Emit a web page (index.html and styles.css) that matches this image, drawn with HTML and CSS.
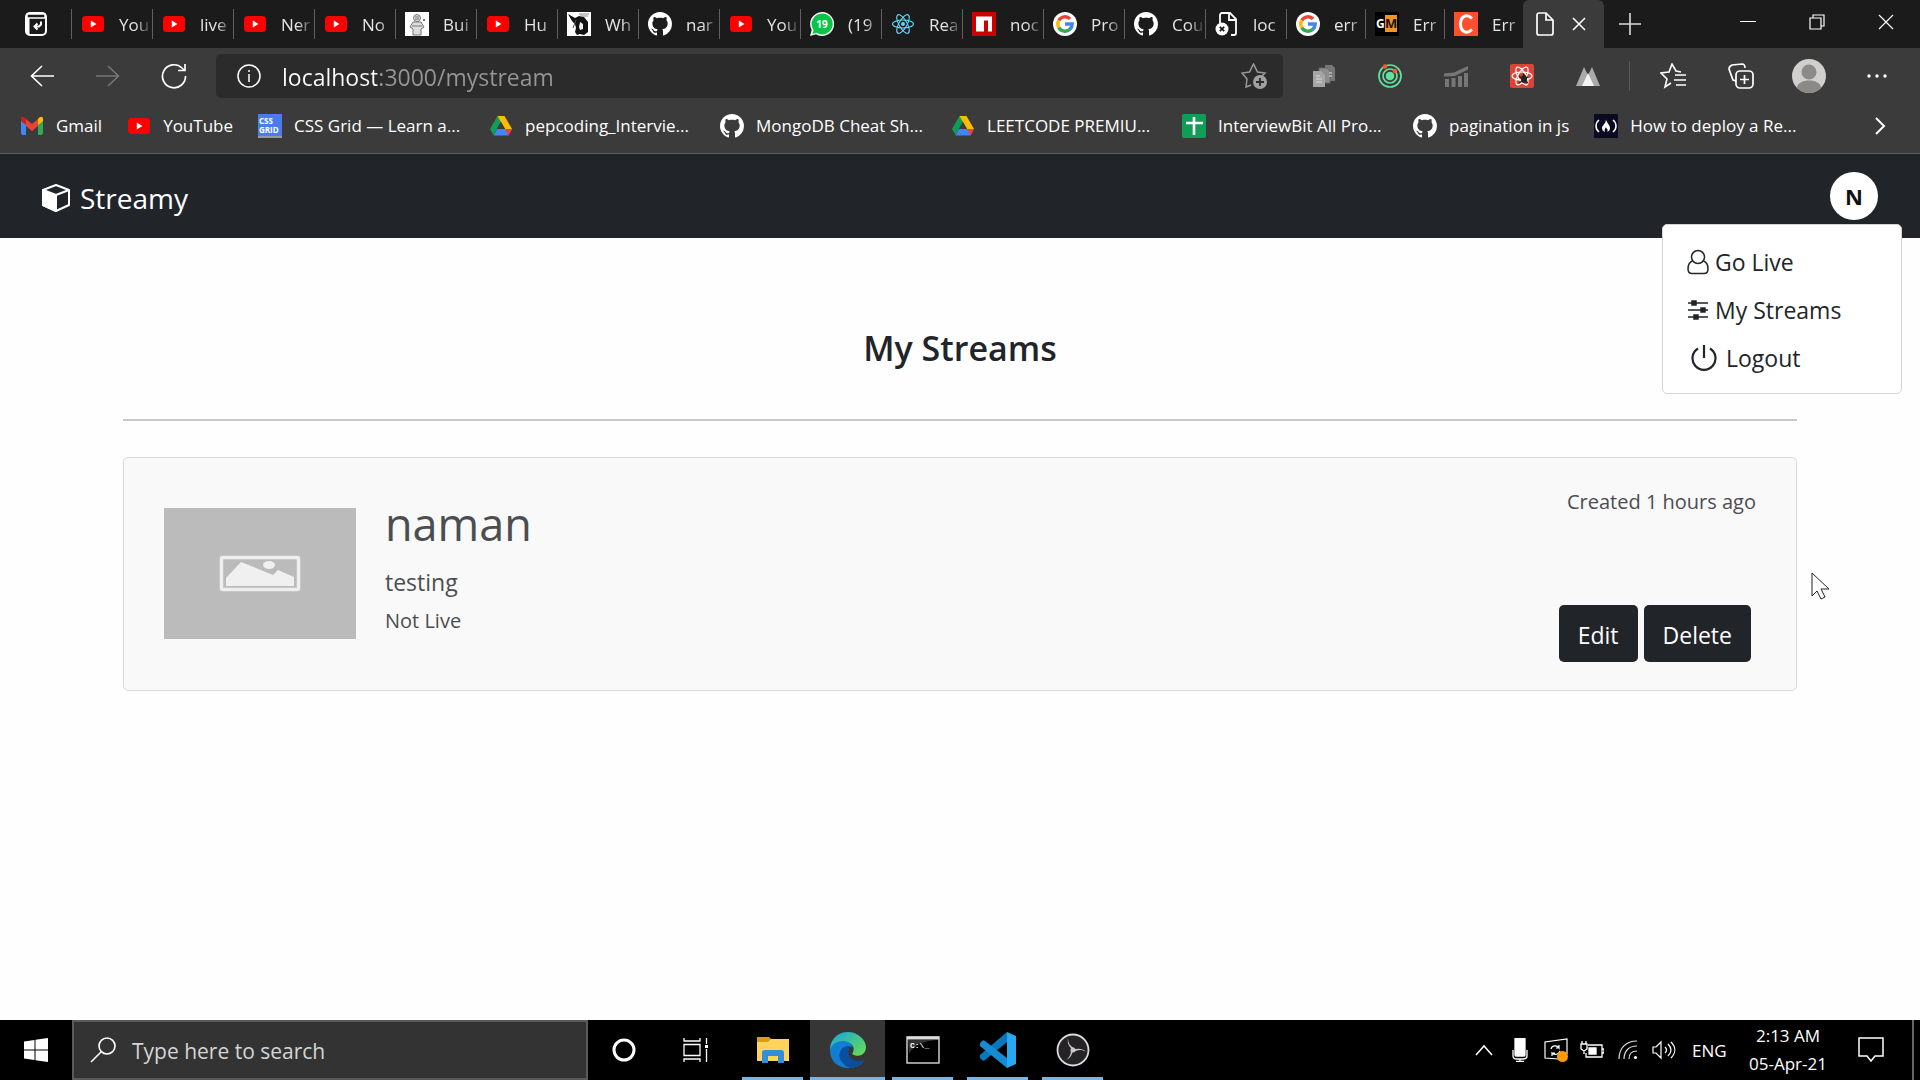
FILE: index.html
```html
<!DOCTYPE html>
<html lang="en">
<head>
<meta charset="utf-8">
<title>Streamy</title>
<link rel="stylesheet" href="styles.css">
</head>
<body>
<svg class="sprite" aria-hidden="true">
  <symbol id="yt" viewBox="0 0 24 24"><rect x="1" y="4" width="22" height="16" rx="3.500" fill="#f00"/><path d="M9.800 8.500v7l5.600-3.500z" fill="#fff"/></symbol>
  <symbol id="github" viewBox="0 0 16 16"><path fill="#fff" d="M8 0C3.58 0 0 3.58 0 8c0 3.540 2.290 6.530 5.470 7.590.4.070.55-.17.55-.38 0-.19-.01-.82-.01-1.490-2.010.37-2.530-.49-2.690-.94-.09-.23-.48-.94-.82-1.130-.28-.15-.68-.52-.01-.53.63-.01 1.080.58 1.230.82.72 1.210 1.870.87 2.330.66.070-.52.280-.87.510-1.070-1.780-.2-3.640-.89-3.640-3.950 0-.87.310-1.590.820-2.150-.08-.2-.36-1.020.080-2.120 0 0 .670-.21 2.200.820.640-.18 1.320-.27 2-.27.680 0 1.360.090 2 .270 1.530-1.040 2.200-.82 2.200-.82.440 1.100.160 1.920.080 2.120.510.560.820 1.270.820 2.150 0 3.070-1.870 3.750-3.650 3.950.290.250.540.730.540 1.480 0 1.070-.01 1.930-.01 2.200 0 .210.150.460.550.380A8.013 8.013 0 0016 8c0-4.420-3.580-8-8-8z"/></symbol>
  <symbol id="google" viewBox="0 0 24 24"><circle cx="12" cy="12" r="12" fill="#fff"/><g fill="none" stroke-width="3.400"><path d="M5.800 8.400A7.200 7.200 0 0 1 17.100 6.900" stroke="#ea4335"/><path d="M5.800 15.600a7.200 7.200 0 0 1 0-7.200" stroke="#fbbc05"/><path d="M16.900 17.300A7.200 7.200 0 0 1 5.800 15.600" stroke="#34a853"/><path d="M12 12h7.200a7.200 7.200 0 0 1-2.500 5.400" stroke="#4285f4"/></g></symbol>
  <symbol id="drive" viewBox="0 0 24 24"><path d="M8.500 2h7l-7.700 13L4.500 21 1 15z" fill="#0f9d58"/><path d="M8.500 2h7L23 15h-7z" fill="#fbbc04"/><path d="M8 15h15l-3.500 6.500h-15z" fill="#4285f4"/><path d="M16 15h7l-3.500 6.500z" fill="#ea4335"/><path d="M12 8l4 7H8z" fill="#3c3c3c"/></symbol>
  <symbol id="react" viewBox="0 0 24 24"><g fill="none" stroke="#61dafb" stroke-width="1.100"><ellipse cx="12" cy="12" rx="10.500" ry="4"/><ellipse cx="12" cy="12" rx="10.500" ry="4" transform="rotate(60 12 12)"/><ellipse cx="12" cy="12" rx="10.500" ry="4" transform="rotate(120 12 12)"/></g><circle cx="12" cy="12" r="2" fill="#61dafb"/></symbol>
</svg>

<header class="browser">
  <div class="tabstrip">
    <button class="tab-actions" aria-label="Tab actions"><svg width="24" height="26" viewBox="0 0 24 26" fill="none" stroke="#fff" stroke-width="2"><rect x="2" y="2" width="20" height="22" rx="4"/><path d="M3 3h18v4H3z" fill="#1b1b1b" stroke-width="1.500"/><path d="M4 7v16" stroke-width="3"/><path d="M17 10.500v3l-2 2h-4M13.500 12.500l-3 3 3 3"/></svg></button>
    <nav class="tabs" aria-label="Open tabs">
      <button class="tab"><svg class="fav"><use href="#yt"/></svg><span>You</span></button>
      <button class="tab"><svg class="fav"><use href="#yt"/></svg><span>live</span></button>
      <button class="tab"><svg class="fav"><use href="#yt"/></svg><span>Ner</span></button>
      <button class="tab"><svg class="fav"><use href="#yt"/></svg><span>No</span></button>
      <button class="tab"><svg class="fav" viewBox="0 0 24 24"><path d="M0 0h24v24H0z" fill="#fff"/><g fill="#ddd" stroke="#777"><circle cx="12" cy="6" r="3.500"/><path d="M8 10h8l3 5-3 2v6H8v-6l-3-2z"/><path d="M7 14h10M10 5h4M10 7h4" fill="none"/></g><circle cx="19" cy="8" r="1" fill="#444"/></svg><span>Bui</span></button>
      <button class="tab"><svg class="fav"><use href="#yt"/></svg><span>Hu</span></button>
      <button class="tab"><svg class="fav" viewBox="0 0 24 24"><path d="M0 0h24v24H0z" fill="#fff"/><path d="M1 2l7 4 4-2 5 1 4 5v10l-4 3-4-1-3 1-2-3 1-4-1-4-3-3z" fill="#111"/><path d="M13 10l3 2v5l-3 1-1-3z" fill="#eee"/><path d="M12 2h10M13 4h8" stroke="#888"/><path d="M9 8l-3 8" stroke="#555"/></svg><span>Wh</span></button>
      <button class="tab"><svg class="fav"><use href="#github"/></svg><span>nar</span></button>
      <button class="tab"><svg class="fav"><use href="#yt"/></svg><span>You</span></button>
      <button class="tab"><svg class="fav" viewBox="0 0 24 24"><path d="M12 0a12 12 0 1 1-6 22.300L0 24l1.700-6A12 12 0 0 1 12 0z" fill="#fff"/><path d="M12 1.500a10.500 10.500 0 1 1-5.500 19.300L2.500 22l1-4A10.500 10.500 0 0 1 12 1.500z" fill="#0ac447"/><text x="12" y="16" text-anchor="middle" class="badge-text">19</text></svg><span>(19</span></button>
      <button class="tab"><svg class="fav"><use href="#react"/></svg><span>Rea</span></button>
      <button class="tab"><svg class="fav" viewBox="0 0 24 24"><path d="M0 0h24v24H0z" fill="#cb0000"/><path d="M4 4.500h16v15h-4v-11h-4v11H4z" fill="#fff"/></svg><span>noc</span></button>
      <button class="tab"><svg class="fav"><use href="#google"/></svg><span>Pro</span></button>
      <button class="tab"><svg class="fav"><use href="#github"/></svg><span>Cou</span></button>
      <button class="tab"><svg class="fav" viewBox="0 0 24 24" fill="none" stroke="#fff" stroke-width="1.800"><path d="M5 11V3a2 2 0 0 1 2-2h8l6 6v14a2 2 0 0 1-2 2h-3M14 1v7h7"/><circle cx="7" cy="17" r="6.500" fill="#fff" stroke="none"/><path d="M4.800 14.800l4.400 4.400m0-4.400l-4.400 4.400" stroke="#1b1b1b"/></svg><span>loc</span></button>
      <button class="tab"><svg class="fav"><use href="#google"/></svg><span>err</span></button>
      <button class="tab"><svg class="fav" viewBox="0 0 24 24"><path d="M0 0h24v24H0z" fill="#000"/><path d="M10 3h12v17H10z" fill="#f7941d"/><text x="1" y="16" class="gm-g">G</text><text x="10" y="16" class="gm-m">M</text></svg><span>Err</span></button>
      <button class="tab"><svg class="fav" viewBox="0 0 24 24"><path d="M0 0h24v24H0z" fill="#ff4f2e"/><path d="M18 6.500C13 1.500 6.500 4 6.500 12s6.500 10.500 11.500 5.500" fill="none" stroke="#fff" stroke-width="3"/></svg><span>Err</span></button>
    </nav>
    <div class="tab-end">
      <button class="active-tab" aria-label="localhost:3000/mystream, close tab"><svg width="20" height="24" viewBox="0 0 20 24" fill="none" stroke="#fff" stroke-width="1.700"><path d="M4 1h7l7 7v13a2 2 0 0 1-2 2H4a2 2 0 0 1-2-2V3a2 2 0 0 1 2-2zM11 1v7h7"/></svg><svg width="14" height="14" viewBox="0 0 14 14" stroke="#fff" stroke-width="1.600"><path d="M1 1l12 12M13 1L1 13"/></svg></button>
      <button class="new-tab" aria-label="New tab"><svg width="22" height="22" viewBox="0 0 22 22" stroke="#ddd" stroke-width="1.600"><path d="M11 0v22M0 11h22"/></svg></button>
      <div class="window-controls">
        <button aria-label="Minimise"><svg width="16" height="16" viewBox="0 0 16 16" stroke="#fff"><path d="M0 7.500h16"/></svg></button>
        <button aria-label="Restore"><svg width="16" height="16" viewBox="0 0 16 16" fill="none" stroke="#fff" stroke-width="1.200"><path d="M1 4h11v11H1zM4 4V1h11v11h-3"/></svg></button>
        <button aria-label="Close"><svg width="16" height="16" viewBox="0 0 16 16" stroke="#fff" stroke-width="1.200"><path d="M1 1l14 14M15 1L1 15"/></svg></button>
      </div>
    </div>
  </div>

  <div class="toolbar">
    <div class="nav-buttons">
      <button aria-label="Back"><svg width="24" height="24" viewBox="0 0 24 24" fill="none" stroke="#fff" stroke-width="1.600"><path d="M24 12H1M12 2L1.500 12 12 22"/></svg></button>
      <button aria-label="Forward"><svg width="24" height="24" viewBox="0 0 24 24" fill="none" stroke="#777" stroke-width="1.600"><path d="M0 12h23M12 2l10.500 10L12 22"/></svg></button>
      <button aria-label="Refresh"><svg width="26" height="26" viewBox="0 0 26 26" fill="none" stroke="#fff" stroke-width="1.700"><path d="M24.500 13A11.500 11.500 0 1 1 21 5l2 2M24 1v6.500h-7"/></svg></button>
    </div>
    <div class="address">
      <svg width="24" height="24" viewBox="0 0 24 24" fill="none" stroke="#fff" stroke-width="1.500"><circle cx="12" cy="12" r="11"/><path d="M12 10v8M12 6v2"/></svg>
      <input class="url" type="text" aria-label="Address" value="localhost:3000/mystream">
      <button aria-label="Add to favourites"><svg width="26" height="26" viewBox="0 0 26 26" fill="none" stroke="#9a9a9a" stroke-width="1.500"><path d="M10 22l-5 2 1-8-5-6 7.500-1L12.500 1l4 8 7.500 1-3 3"/><circle cx="19" cy="19" r="7" fill="#a0a0a0" stroke="none"/><path d="M19 15v8M15 19h8" stroke="#2b2b2b" stroke-width="1.800"/></svg></button>
    </div>
    <div class="extensions">
      <button aria-label="Documents"><svg width="24" height="24" viewBox="0 0 24 24"><path d="M13 1h7l3 3v13H13z" fill="#777"/><path d="M7 4h8l3 3v12H7z" fill="#8d8d8d" stroke="#666"/><path d="M1 7h8l4 4v12H1z" fill="#a5a5a5"/><path d="M4 12h4M4 15h6M4 18h6M17 9h3M17 12h3" stroke="#ddd"/></svg></button>
      <button aria-label="Orbit"><svg width="24" height="24" viewBox="0 0 24 24" fill="none" stroke="#62e0a0" stroke-width="1.700"><circle cx="12" cy="12" r="11"/><circle cx="12" cy="12" r="7"/><circle cx="12" cy="12" r="3.500" fill="#62e0a0"/><g fill="#ff5a1f" stroke="none"><circle cx="7" cy="2.500" r="2.200"/><circle cx="17" cy="7" r="2.200"/></g></svg></button>
      <button aria-label="Statistics"><svg width="24" height="24" viewBox="0 0 24 24" fill="#777"><path d="M0 9.500l10-1L24 2v3.500L11 12 0 12.500zM1 15h4v8H1zM7.500 14h4v9h-4zM14 12h4v11h-4zM20 9h4v14h-4z"/></svg></button>
      <button aria-label="React tools"><svg width="24" height="24" viewBox="0 0 24 24"><rect width="24" height="24" rx="2" fill="#dc4437"/><g fill="none" stroke="#fff" stroke-width="1.200"><ellipse cx="12" cy="12" rx="10" ry="4"/><ellipse cx="12" cy="12" rx="10" ry="4" transform="rotate(60 12 12)"/><ellipse cx="12" cy="12" rx="10" ry="4" transform="rotate(120 12 12)"/></g><ellipse cx="14" cy="15" rx="3" ry="4" fill="#222"/><path d="M9 12l9 7M9 19l9-6M13 10l2 3" stroke="#222" stroke-width="1.500"/></svg></button>
      <button aria-label="Peaks"><svg width="24" height="24" viewBox="0 0 24 24"><path d="M0 22L8 3l5 10-5 9zM24 22L16 3l-5 10 5 9z" fill="#aaa"/><path d="M12 9l6 13H6z" fill="#f4f4f4"/></svg></button>
    </div>
    <div class="browser-actions">
      <button aria-label="Favourites"><svg width="26" height="26" viewBox="0 0 26 26" fill="none" stroke="#fff" stroke-width="1.600"><path d="M21 9l-5-1-4-7-3 8-8 1 6 6-2 8 6-4M15 12h11M14 17h12M16 22h10"/></svg></button>
      <button aria-label="Collections"><svg width="26" height="26" viewBox="0 0 26 26" fill="none" stroke="#fff" stroke-width="1.700"><rect x="8" y="8" width="17" height="17" rx="4"/><path d="M16.500 12v9M12 16.500h9M8 18l-3-1L1 6c0-2 1-3 3-4l10-1c2 0 3 1 3 4"/></svg></button>
      <button aria-label="Profile"><svg width="34" height="34" viewBox="0 0 34 34"><circle cx="17" cy="17" r="17" fill="#d0cfcd"/><circle cx="17" cy="13" r="7.500" fill="#8c8a87"/><path d="M5 29c0-10 24-10 24 0a17 17 0 0 1-24 0z" fill="#8c8a87"/></svg></button>
      <button aria-label="More"><svg width="20" height="4" viewBox="0 0 20 4" fill="#fff"><circle cx="2" cy="2" r="1.700"/><circle cx="10" cy="2" r="1.700"/><circle cx="18" cy="2" r="1.700"/></svg></button>
    </div>
  </div>

  <nav class="bookmarks" aria-label="Bookmarks">
    <a href="#"><svg class="fav" viewBox="0 0 24 24"><path d="M1 6v13c0 1 1 2 2 2h3V9z" fill="#4285f4"/><path d="M23 6v13c0 1-1 2-2 2h-3V9z" fill="#34a853"/><path d="M18 5v6l5-4V5c0-3-3-3-5 0z" fill="#fbbc04"/><path d="M6 5v7l6 5 6-5V5l-6 5z" fill="#ea4335"/><path d="M6 5v6L1 7V5c0-3 3-3 5 0z" fill="#c5221f"/></svg><span>Gmail</span></a>
    <a href="#"><svg class="fav"><use href="#yt"/></svg><span>YouTube</span></a>
    <a href="#" class="long"><svg class="fav" viewBox="0 0 24 24"><path d="M0 0h24v24H0z" fill="#4a7cf0"/><path d="M0 22h24v2H0z" fill="#999"/><text x="1" y="10" class="css-mark">CSS</text><text x="1" y="19" class="css-mark">GRID</text></svg><span>CSS Grid — Learn a...</span></a>
    <a href="#" class="long"><svg class="fav"><use href="#drive"/></svg><span>pepcoding_Intervie...</span></a>
    <a href="#" class="long"><svg class="fav"><use href="#github"/></svg><span>MongoDB Cheat Sh...</span></a>
    <a href="#" class="long"><svg class="fav"><use href="#drive"/></svg><span>LEETCODE PREMIU...</span></a>
    <a href="#" class="long"><svg class="fav" viewBox="0 0 24 24"><rect width="24" height="24" rx="2" fill="#0f9d58"/><path d="M12 3v18M4 9h17" stroke="#fff" stroke-width="2.600"/></svg><span>InterviewBit All Pro...</span></a>
    <a href="#"><svg class="fav"><use href="#github"/></svg><span>pagination in js</span></a>
    <a href="#" class="long"><svg class="fav" viewBox="0 0 24 24"><path d="M0 0h24v24H0z" fill="#0a0a23"/><path d="M5 6c-4 3-4 9 0 12M19 6c4 3 4 9 0 12" fill="none" stroke="#fff" stroke-width="1.500"/><path d="M12 5c0 3 4 6 4 9 0 2-1 3-3 4 2-3-1-3-1-5-1 2-2 3-1 5-2-1-3-2-3-4 0-3 4-4 4-9z" fill="#fff"/></svg><span>How to deploy a Re...</span></a>
    <button class="more-bookmarks" aria-label="More bookmarks"><svg width="12" height="18" viewBox="0 0 12 18" fill="none" stroke="#fff" stroke-width="2"><path d="M2 1l8 8-8 8"/></svg></button>
  </nav>
</header>

<div class="navbar">
  <a class="brand" href="#"><svg width="30" height="30" viewBox="0 0 30 30" fill="none" stroke="#fff" stroke-width="2"><path d="M15 2l13 5v15l-13 6-13-6V7z" stroke-linejoin="round"/><path d="M2 7l13 5v16L2 22z" fill="#fff" stroke-linejoin="round"/><path d="M15 12l13-5"/></svg>Streamy</a>
  <div class="account">
    <button class="avatar" aria-label="Account menu">N</button>
    <nav class="menu" aria-label="Account">
      <a href="#"><svg width="22" height="26" viewBox="0 0 22 26" fill="none" stroke="#212529" stroke-width="1.500"><circle cx="11" cy="8" r="6.500"/><path d="M5.500 12C2.500 13 1 16.500 1 20c0 3 1.500 4.500 4 4.500h12c2.500 0 4-1.500 4-4.500 0-3.500-1.500-7-4.500-8"/></svg>Go Live</a>
      <a href="#"><svg width="22" height="26" viewBox="0 0 22 26" fill="#212529" stroke="#212529" stroke-width="1.500"><path d="M1 6h20M1 13h20M1 20h20"/><path d="M5 4h4v4H5zM14 11h4v4h-4zM7 18h4v4H7z"/></svg>My Streams</a>
      <a href="#" class="logout"><svg width="26" height="26" viewBox="0 0 26 26" fill="none" stroke="#212529" stroke-width="2.200"><path d="M7 3.500a11.500 11.500 0 1 0 12 0M13 0v13"/></svg>Logout</a>
    </nav>
  </div>
</div>

<main class="page">
  <h1>My Streams</h1>
  <hr>
  <article class="card">
    <svg class="thumb" viewBox="0 0 192 131" role="img" aria-label="No thumbnail"><path d="M0 0h192v131H0z" fill="#bbb"/><rect x="57.500" y="49.500" width="77" height="32" rx="1" fill="none" stroke="#eee" stroke-width="3.500"/><path d="M62 78v-8l15-16 32 13 5-5 16 7v9z" fill="#f0f0f0"/><ellipse cx="105" cy="57" rx="6" ry="4" fill="#f0f0f0"/></svg>
    <div class="details">
      <h2>naman</h2>
      <p class="description">testing</p>
      <p class="status">Not Live</p>
    </div>
    <div class="side">
      <p class="created">Created 1 hours ago</p>
      <div class="actions"><button>Edit</button><button>Delete</button></div>
    </div>
  </article>
</main>

<svg class="cursor" width="20" height="30" viewBox="0 0 20 30" aria-hidden="true"><path d="M1 1v23l5-5 4 8 4-2-4-8h8z" fill="#fff" stroke="#222"/></svg>

<footer class="taskbar">
  <button class="start" aria-label="Start"><svg width="24" height="24" viewBox="0 0 24 24" fill="#fff"><path d="M0 3.400l10.500-1.400v9.500H0zM11.500 1.800L24 0v11.500H11.500zM0 12.500h10.500V22L0 20.600zM11.500 12.500H24V24l-12.500-1.800z"/></svg></button>
  <label class="search"><svg width="26" height="26" viewBox="0 0 26 26" fill="none" stroke="#fff" stroke-width="1.600"><circle cx="17" cy="9" r="8"/><path d="M11.500 14.500L1 25"/></svg><input type="text" aria-label="Search" placeholder="Type here to search"></label>
  <button class="task" aria-label="Cortana"><svg width="24" height="24" viewBox="0 0 24 24"><circle cx="12" cy="12" r="10" fill="none" stroke="#fff" stroke-width="3"/></svg></button>
  <button class="task" aria-label="Task view"><svg width="26" height="24" viewBox="0 0 26 24" fill="none" stroke="#fff" stroke-width="1.300"><path d="M1 0v3h16V0M1 6.500h16v11H1zM1 24v-3h16v3M23.500 0v6M23.500 11v13"/><path d="M22 7h3v3h-3z" fill="#fff" stroke="none"/></svg></button>
  <div class="apps">
    <button class="app" aria-label="File Explorer"><svg width="36" height="36" viewBox="0 0 36 36"><path d="M2 5h12l3 3v4H2z" fill="#dd9b12"/><path d="M2 10h11l3-3h18v22H2z" fill="#ffd45c"/><path d="M7 31V21c0-2 1-3 3-3h16c2 0 3 1 3 3v10h-6v-7H13v7z" fill="#2f8fdd"/></svg></button>
    <button class="app current" aria-label="Microsoft Edge"><svg width="36" height="36" viewBox="0 0 36 36"><defs><linearGradient id="edge-a" x1="0" x2="1" y1="0" y2="1"><stop offset="0" stop-color="#17a5dc"/><stop offset="1" stop-color="#6be04c"/></linearGradient></defs><path d="M0 18C0 7 8 0 18 0s18 8 18 15c0 8-8 11-14 7 2-3 2-5 1-8-4-6-15-5-23 4z" fill="url(#edge-a)"/><path d="M0 18C3 7 20 6 23 15c-8-3-13 7-7 14 5 6 12 5 18 0-8 11-34 10-34-11z" fill="#127ed2"/><path d="M20 14c-9-1-14 9-8 16 2 3 5 5 8 6 6 0 11-3 14-8-7 3-15 0-15-7-1-3 1-5 1-7z" fill="#0a4f9e"/></svg></button>
    <button class="app" aria-label="Command Prompt"><svg width="34" height="28" viewBox="0 0 34 28"><path d="M1 1h32v26H1z" stroke="#ccc" stroke-width="1.500"/><path d="M1 2h32" stroke="#ddd" stroke-width="3"/><path d="M2 4h30C16 5 8 9 3 18z" fill="#333"/><text x="4" y="12" class="prompt">C:\_</text></svg></button>
    <button class="app" aria-label="Visual Studio Code"><svg width="36" height="36" viewBox="0 0 36 36"><path d="M27 0v10L5 28c-1 1-2 1-3 0l-2-2v-3z" fill="#0878bd"/><path d="M27 36V26L5 9C4 8 3 8 2 9l-2 2v3z" fill="#168bd2"/><path d="M27 0l9 4v28l-9 4z" fill="#29a8f2"/></svg></button>
    <button class="app" aria-label="OBS Studio"><svg width="34" height="34" viewBox="0 0 34 34" fill="none"><circle cx="17" cy="17" r="15.500" fill="#262326" stroke="#ddd" stroke-width="1.800"/><g fill="#c8c8c8"><path id="obs-blade" d="M12 5c-1 5 1 9 5 12l1-2c-4-2-6-5-6-10z"/><path d="M12 5c-1 5 1 9 5 12l1-2c-4-2-6-5-6-10z" transform="rotate(120 17 17)"/><path d="M12 5c-1 5 1 9 5 12l1-2c-4-2-6-5-6-10z" transform="rotate(240 17 17)"/><circle cx="17" cy="17" r="2.500"/></g></svg></button>
  </div>
  <div class="tray">
    <button aria-label="Show hidden icons"><svg width="18" height="12" viewBox="0 0 18 12" fill="none" stroke="#fff" stroke-width="1.500"><path d="M1 11l8-9 8 9"/></svg></button>
    <button aria-label="Microphone"><svg width="16" height="24" viewBox="0 0 16 24" fill="none" stroke="#fff" stroke-width="1.300"><rect x="3" y="0" width="10" height="18" rx="1" fill="#fff"/><path d="M1 12v6c0 2 2 3 4 3h6c2 0 4-1 4-3v-6M8 21v3M4 23.500h8"/></svg></button>
    <button aria-label="Updates"><svg width="24" height="24" viewBox="0 0 24 24" fill="none" stroke="#fff" stroke-width="1.200"><path d="M15 21L1 20V4l22-3v15M7 11c1-4 6-4 8-1V7M15 10h-3M16 13c-1 4-6 4-8 2v3M8 15h3"/><circle cx="18.500" cy="18.500" r="5.500" fill="#ff9a0a" stroke="none"/></svg></button>
    <button aria-label="Battery"><svg width="24" height="18" viewBox="0 0 24 18" fill="none" stroke="#fff" stroke-width="1.300"><path d="M8 4h14v12H6V12M22 8h2v4h-2"/><path d="M9 7h7v6H9z" fill="#fff"/><path d="M1 3h6v5L4 10 1 8zM2 3V0M6 3V0M4 10v3"/></svg></button>
    <button aria-label="Network"><svg width="20" height="20" viewBox="0 0 20 20" fill="none" stroke="#ddd" stroke-width="1.200"><path d="M1 19C1 8 8 1 19 1M6 19C6 11 11 6 19 6M11 19c0-5 3-8 8-8"/><circle cx="17.500" cy="17.500" r="1.600" fill="#fff" stroke="none"/></svg></button>
    <button aria-label="Volume"><svg width="24" height="20" viewBox="0 0 24 20" fill="none" stroke="#fff" stroke-width="1.200"><path d="M1 7h3l5-5v16l-5-5H1zM13 7c2 2 2 4 0 6M16 4c4 4 4 8 0 12M19 2c5 5 5 11 0 16"/></svg></button>
    <span class="language">ENG</span>
    <time class="clock" datetime="2021-04-05T02:13">2:13 AM<br>05-Apr-21</time>
    <button class="notifications" aria-label="Notifications"><svg width="26" height="26" viewBox="0 0 26 26" fill="none" stroke="#fff" stroke-width="1.500"><path d="M1 1h24v18h-8l-4 5-4-5H1z"/></svg></button>
  </div>
</footer>
</body>
</html>
```

FILE: styles.css
```css
* { box-sizing: border-box; }

body {
  margin: 0;
  min-height: 100vh;
  display: flex;
  flex-direction: column;
  background: #fefefe;
  color: #212529;
  font-family: "Open Sans", "Noto Sans", sans-serif;
}

button, input {
  font: inherit;
  color: inherit;
  border: 0;
  padding: 0;
  background: none;
}

button {
  display: inline-flex;
  align-items: center;
  justify-content: center;
}

a { color: inherit; text-decoration: none; }
svg { flex: none; display: block; }
h1, h2, p { margin: 0; }
.sprite { position: absolute; width: 0; height: 0; }
.fav { width: 24px; height: 24px; }

/* Browser window */
.browser {
  background: #3b3b3b;
  color: #fff;
  font-size: 17px;
  border-bottom: 1px solid #5c5c5c;
}

.tabstrip {
  display: flex;
  height: 48px;
  background: #1b1b1b;
}

.tab-actions { width: 71px; }

.tabs {
  flex: 1;
  min-width: 0;
  display: grid;
  grid-template-columns: repeat(15, minmax(0, 81fr)) repeat(3, minmax(0, 79fr));
  align-items: center;
}

.tab {
  height: 30px;
  padding: 0 0 0 9px;
  gap: 14px;
  justify-content: flex-start;
  border-left: 1px solid #606060;
  color: #e4e4e4;
}

.tab span {
  flex: 1;
  min-width: 0;
  overflow: hidden;
  text-align: left;
  white-space: nowrap;
  -webkit-mask-image: linear-gradient(to right, #000 50%, transparent);
  mask-image: linear-gradient(to right, #000 50%, transparent);
}

.badge-text { font: bold 10px "Open Sans", sans-serif; fill: #fff; }
.gm-g { font: bold 12px "Open Sans", sans-serif; fill: #fff; }
.gm-m { font: bold 13px "Open Sans", sans-serif; fill: #111; }
.css-mark { font: bold 8px "Open Sans", sans-serif; fill: #fff; }
.prompt { font: bold 8px "Liberation Mono", monospace; fill: #fff; }

.tab-end { display: flex; width: 397px; }

.active-tab {
  width: 81px;
  padding-right: 7px;
  gap: 17px;
  background: #3b3b3b;
  border-radius: 6px 6px 0 0;
}

.new-tab { width: 52px; }

.window-controls {
  display: flex;
  flex: 1;
  justify-content: flex-end;
}

.window-controls button { width: 69px; height: 44px; }

.toolbar {
  display: flex;
  align-items: center;
  height: 56px;
}

.nav-buttons { display: flex; padding: 0 9px; }
.nav-buttons button { width: 66px; height: 44px; }

.address {
  flex: 1;
  display: flex;
  align-items: center;
  gap: 21px;
  height: 44px;
  padding: 0 16px 0 21px;
  border-radius: 5px;
  background: #2b2b2b;
}

.url {
  flex: 1;
  min-width: 0;
  padding-top: 2px;
  font-size: 23px;
  color: transparent;
  background: linear-gradient(to right, #fff 95px, #969696 95px);
  -webkit-background-clip: text;
  background-clip: text;
}

.extensions {
  display: flex;
  padding: 0 8px;
  border-right: 1px solid #5a5a5a;
}

.extensions button { width: 66px; height: 30px; }
.browser-actions { display: flex; padding: 0 9px; }
.browser-actions button { width: 68px; height: 34px; }

.bookmarks {
  display: flex;
  align-items: center;
  gap: 25px;
  height: 49px;
  padding: 0 34px 6px 20px;
  white-space: nowrap;
}

.bookmarks a { display: flex; align-items: center; gap: 12px; }
.bookmarks .long span { width: 170px; }
.more-bookmarks { margin-left: auto; }

/* Site header */
.navbar {
  display: flex;
  align-items: center;
  justify-content: space-between;
  height: 84px;
  padding: 0 42px 0 41px;
  background: #212429;
  color: #fff;
}

.brand {
  display: flex;
  align-items: center;
  gap: 9px;
  padding-top: 4px;
  font-size: 28px;
}

.account { position: relative; }

.avatar {
  width: 48px;
  height: 48px;
  border-radius: 50%;
  background: #fff;
  color: #111;
  font-size: 22px;
  font-weight: 700;
}

.menu {
  position: absolute;
  z-index: 1;
  top: 52px;
  right: -24px;
  width: 240px;
  padding: 13px 24px 11px;
  border: 1px solid #d5d5d5;
  border-radius: 5px;
  background: #fff;
  color: #212529;
  font-size: 23px;
}

.menu a {
  display: flex;
  align-items: center;
  gap: 6px;
  height: 48px;
}

.menu .logout { padding-left: 4px; gap: 9px; }

/* Stream list */
.page {
  flex: 1;
  width: 100%;
  padding: 86px 123px 40px;
}

h1 {
  font-size: 34px;
  line-height: 48px;
  font-weight: 600;
  text-align: center;
}

hr {
  height: 2px;
  margin: 47px 0 36px;
  border: 0;
  background: #c8c8c8;
}

.card {
  display: flex;
  min-height: 234px;
  padding: 28px 40px;
  border: 1px solid #dadada;
  border-radius: 5px;
  background: #f9f9f9;
  color: #4b4e51;
}

.thumb { width: 192px; height: 131px; margin-top: 22px; }
.details { flex: 1; padding: 6px 29px; }

h2 {
  font-size: 45px;
  line-height: 64px;
  font-weight: 400;
}

.description {
  margin-top: 8px;
  font-size: 23px;
  line-height: 36px;
}

.status { font-size: 20px; line-height: 42px; }

.side {
  display: flex;
  flex-direction: column;
  justify-content: space-between;
  align-items: flex-end;
}

.created { font-size: 20px; line-height: 32px; }
.actions { display: flex; gap: 6px; padding-right: 5px; }

.actions button {
  height: 57px;
  padding: 3px 19px 0;
  border-radius: 5px;
  background: #212429;
  color: #fff;
  font-size: 23px;
}

.cursor { position: absolute; left: 1811px; top: 572px; }

/* Taskbar */
.taskbar {
  display: flex;
  height: 60px;
  background: #000;
  color: #fff;
}

.start, .task { width: 72px; }

.search {
  display: flex;
  align-items: center;
  gap: 16px;
  width: 516px;
  padding-left: 16px;
  border: 2px solid #5a5a5a;
  background: #333;
}

.search input { flex: 1; min-width: 0; padding-top: 2px; font-size: 21px; }
.search input::placeholder { color: #d5d5d5; opacity: 1; }
.apps { display: flex; padding-left: 3px; }

.app {
  width: 75px;
  background: linear-gradient(#76b5e8, #76b5e8) bottom / 61px 3px no-repeat;
}

.app.current {
  background: linear-gradient(#76b5e8, #76b5e8) bottom / 100% 3px no-repeat #363636;
}

.tray {
  display: flex;
  align-items: center;
  margin: 0 6px 0 auto;
  padding-right: 8px;
  border-right: 2px solid #666;
}

.tray button { width: 36px; height: 60px; }
.language { width: 56px; padding-left: 10px; font-size: 17px; }

.clock {
  width: 100px;
  font-size: 17px;
  line-height: 28px;
  text-align: center;
}

.tray .notifications { width: 66px; }
```
